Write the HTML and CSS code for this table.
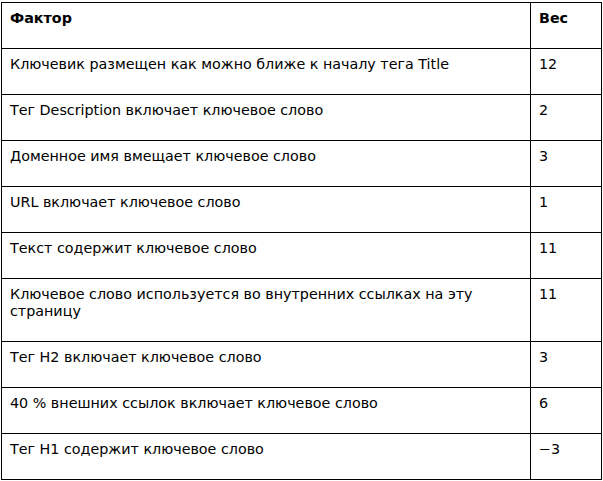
FILE: index.html
```html
<!DOCTYPE html>
<html lang="ru">
<head>
<meta charset="utf-8">
<link rel="stylesheet" href="styles.css">
</head>
<body>
<table class="factors">
  <tr><th class="c1">Фактор</th><th class="c2">Вес</th></tr>
  <tr><td>Ключевик размещен как можно ближе к началу тега Title</td><td>12</td></tr>
  <tr><td>Тег Description включает ключевое слово</td><td>2</td></tr>
  <tr><td>Доменное имя вмещает ключевое слово</td><td>3</td></tr>
  <tr><td>URL включает ключевое слово</td><td>1</td></tr>
  <tr><td>Текст содержит ключевое слово</td><td>11</td></tr>
  <tr><td>Ключевое слово используется во внутренних ссылках на эту страницу</td><td>11</td></tr>
  <tr><td>Тег H2 включает ключевое слово</td><td>3</td></tr>
  <tr><td>40 % внешних ссылок включает ключевое слово</td><td>6</td></tr>
  <tr><td>Тег H1 содержит ключевое слово</td><td>−3</td></tr>
</table>
</body>
</html>
```

FILE: styles.css
```css
html, body {
  margin: 0;
  padding: 0;
  background: #fff;
}
body {
  padding: 2px 0 0 1px;
  font-family: "DejaVu Sans", Verdana, sans-serif;
  font-size: 14.3px;
  color: #000;
}
.factors {
  border-collapse: collapse;
  width: 601px;
}
.factors th,
.factors td {
  border: 1px solid #000;
  text-align: left;
  vertical-align: top;
  padding: 7px 8px 21px 8px;
  line-height: 17px;
}
.factors th { font-weight: bold; }
.factors .c1 { width: 512px; }
```
